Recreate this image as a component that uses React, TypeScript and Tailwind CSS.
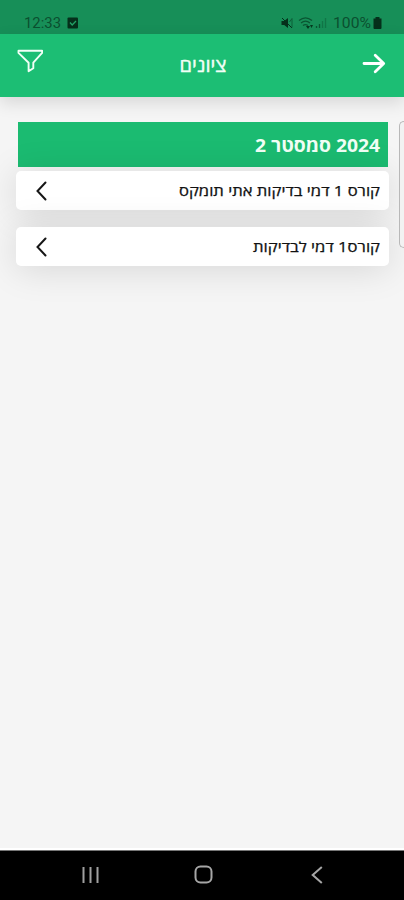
import React from "react";

interface Course {
  id: number;
  name: string;
  width: string;
}

const courses: Course[] = [
  { id: 1, name: "קורס 1 דמי בדיקות אתי תומקס", width: "201" },
  { id: 2, name: "קורס1 דמי לבדיקות", width: "127" },
];

const StatusBar: React.FC = () => (
  <div
    dir="ltr"
    className="flex h-[34px] items-start justify-between bg-[#178f58] pt-[13px] pr-[22px] pl-[24px] text-[#0b5030]"
  >
    <div className="flex items-center">
      <svg width="39" height="20" className="overflow-visible">
        <text x="0" y="15" fontSize="14.5" textLength="37" lengthAdjust="spacingAndGlyphs" fill="currentColor">
          12:33
        </text>
      </svg>
      <svg width="12" height="12" viewBox="0 0 12 12" className="ml-1">
        <rect x="0.5" y="0.5" width="10.5" height="11" rx="1" fill="#05301b" />
        <path d="M3 5.5 5.2 8 9 4" fill="none" stroke="#23a267" strokeWidth="1.3" />
      </svg>
    </div>
    <div className="flex items-center">
      {/* Muted speaker */}
      <svg width="13" height="12" viewBox="0 0 13 12">
        <path d="M0.5 4h2.7L7 1v10L3.2 8H0.5z" fill="#05301b" />
        <path d="M1 1l10 10" fill="none" stroke="#05301b" />
        <path d="M8.5 5l2.5-3.5M11 1.5v9" fill="none" stroke="#0d5f39" />
      </svg>
      {/* Wifi */}
      <svg width="17" height="12" viewBox="0 0 17 12" className="ml-1">
        <g fill="none" stroke="#0a5532" strokeWidth="1.2">
          <path d="M1 3.5C5 .2 10 .2 14 3.5M3 6c3-2.5 6-2.5 9 0M5 8.5c1.5-1.3 3-1.3 5 0" />
        </g>
        <path d="M8 9h4l-2 3zM12 8h3l-1.5 3z" fill="#06391f" />
      </svg>
      {/* Signal */}
      <svg width="13" height="12" viewBox="0 0 13 12" className="mr-[5px]">
        <path d="M1.5 9v2M4.5 7v4" stroke="#0b5532" strokeWidth="1.3" />
        <path d="M7.5 4v7M10.5 1v10" stroke="#117547" strokeWidth="1.3" />
      </svg>
      <svg width="40" height="20" className="overflow-visible">
        <text x="0" y="15" fontSize="14.5" textLength="38" lengthAdjust="spacingAndGlyphs" fill="currentColor">
          100%
        </text>
      </svg>
      <svg width="9" height="12" viewBox="0 0 9 12">
        <path d="M2.5 0h4v1.5H8.5V11a1 1 0 0 1-1 1h-6a1 1 0 0 1-1-1V1.5h2z" fill="#05301b" />
      </svg>
    </div>
  </div>
);

const Header: React.FC = () => (
  <header
    dir="ltr"
    className="flex h-[63px] items-start justify-between bg-[#1cbe74] pr-[18px] pl-[17px] text-white shadow-[0_6px_16px_rgba(0,0,0,0.12)]"
  >
    <button type="button" className="mt-[15px]">
      <svg width="26" height="24" viewBox="0 0 26 24" fill="none" stroke="#f1fff6" strokeWidth="1.9" strokeLinejoin="round">
        <path d="M1.5 1.7h23.6v2.2L16.3 13.7v5.5l-4.7 3v-8.5L1.5 3.9z" />
      </svg>
    </button>
    <h1 className="mt-[17px]">
      <svg width="48" height="28" className="overflow-visible">
        <text x="24" y="21" direction="rtl" textAnchor="middle" fontSize="19" textLength="47" lengthAdjust="spacingAndGlyphs" fill="#f1fff6" stroke="#f1fff6" strokeWidth="0.4">
          ציונים
        </text>
      </svg>
    </h1>
    <button type="button" className="mt-[19px]">
      <svg width="24" height="21" viewBox="0 0 24 21" fill="none" stroke="white" strokeWidth="2.8" strokeLinecap="round" strokeLinejoin="round">
        <path d="M2 10.5h19.5M13.2 2.2l8.5 8.3-8.5 8.3" />
      </svg>
    </button>
  </header>
);

const CourseRow: React.FC<{ course: Course }> = ({ course }) => (
  <li className="flex h-[39px] items-center justify-between rounded-[5px] bg-white pr-[9px] pl-5 shadow-[0_3px_36px_rgba(0,0,0,0.13)]">
    <svg width={course.width} height="24" className="overflow-visible">
      <text x={course.width} y="17" direction="rtl" fontSize="14" textLength={course.width} lengthAdjust="spacingAndGlyphs" fill="#111" stroke="#111" strokeWidth="0.25">
        {course.name}
      </text>
    </svg>
    <svg width="11" height="20" viewBox="0 0 11 20" fill="none" stroke="#161616" strokeWidth="2" strokeLinecap="round">
      <path d="M9.5 1.5 1.5 10l8 8.5" />
    </svg>
  </li>
);

const NavigationBar: React.FC = () => (
  <nav
    dir="ltr"
    className="flex h-[50px] items-center justify-between border-t border-[#777] bg-black pr-[81px] pb-[2px] pl-[82px]"
  >
    <svg width="17" height="18" viewBox="0 0 17 18" stroke="#a0a0a0" strokeWidth="2">
      <path d="M1.5 1v16M8.5 1v16M15.5 1v16" />
    </svg>
    <svg width="19" height="19" viewBox="0 0 19 19" fill="none" stroke="#a6a6a6" strokeWidth="2" className="-ml-[3px]">
      <rect x="1.5" y="1.5" width="16" height="16" rx="5" />
    </svg>
    <svg width="12" height="18" viewBox="0 0 12 18" fill="none" stroke="#a6a6a6" strokeWidth="2">
      <path d="M10.8 1 1.7 9l9.1 8" />
    </svg>
  </nav>
);

const App: React.FC = () => {
  return (
    <div
      dir="rtl"
      className="flex h-[900px] w-[404px] flex-col overflow-hidden bg-[#f5f5f5] font-['Open_Sans',sans-serif]"
    >
      <div className="font-['Roboto',sans-serif]">
        <StatusBar />
      </div>
      <Header />
      <main className="relative flex-1 border-b-2 border-white pt-[25px] pr-[15px] pl-4">
        <h2 className="mr-px ml-[2px] flex h-[45px] items-center bg-[#1bbb71] pr-2">
          <svg width="125" height="28" className="overflow-visible">
            <text x="125" y="20.5" direction="rtl" fontSize="18.5" fontWeight="700" textLength="125" lengthAdjust="spacingAndGlyphs" fill="#f1fff6">
              2024 סמסטר 2
            </text>
          </svg>
        </h2>
        <ul className="mt-1 flex flex-col gap-[17px]">
          {courses.map((course) => (
            <CourseRow key={course.id} course={course} />
          ))}
        </ul>
        {/* Edge panel handle */}
        <div className="absolute top-6 right-0 h-[127px] w-[5px] rounded-l-[5px] border border-r-0 border-[#b8b8b8] bg-[#f2f2f2]" />
      </main>
      <NavigationBar />
    </div>
  );
};

export default App;
